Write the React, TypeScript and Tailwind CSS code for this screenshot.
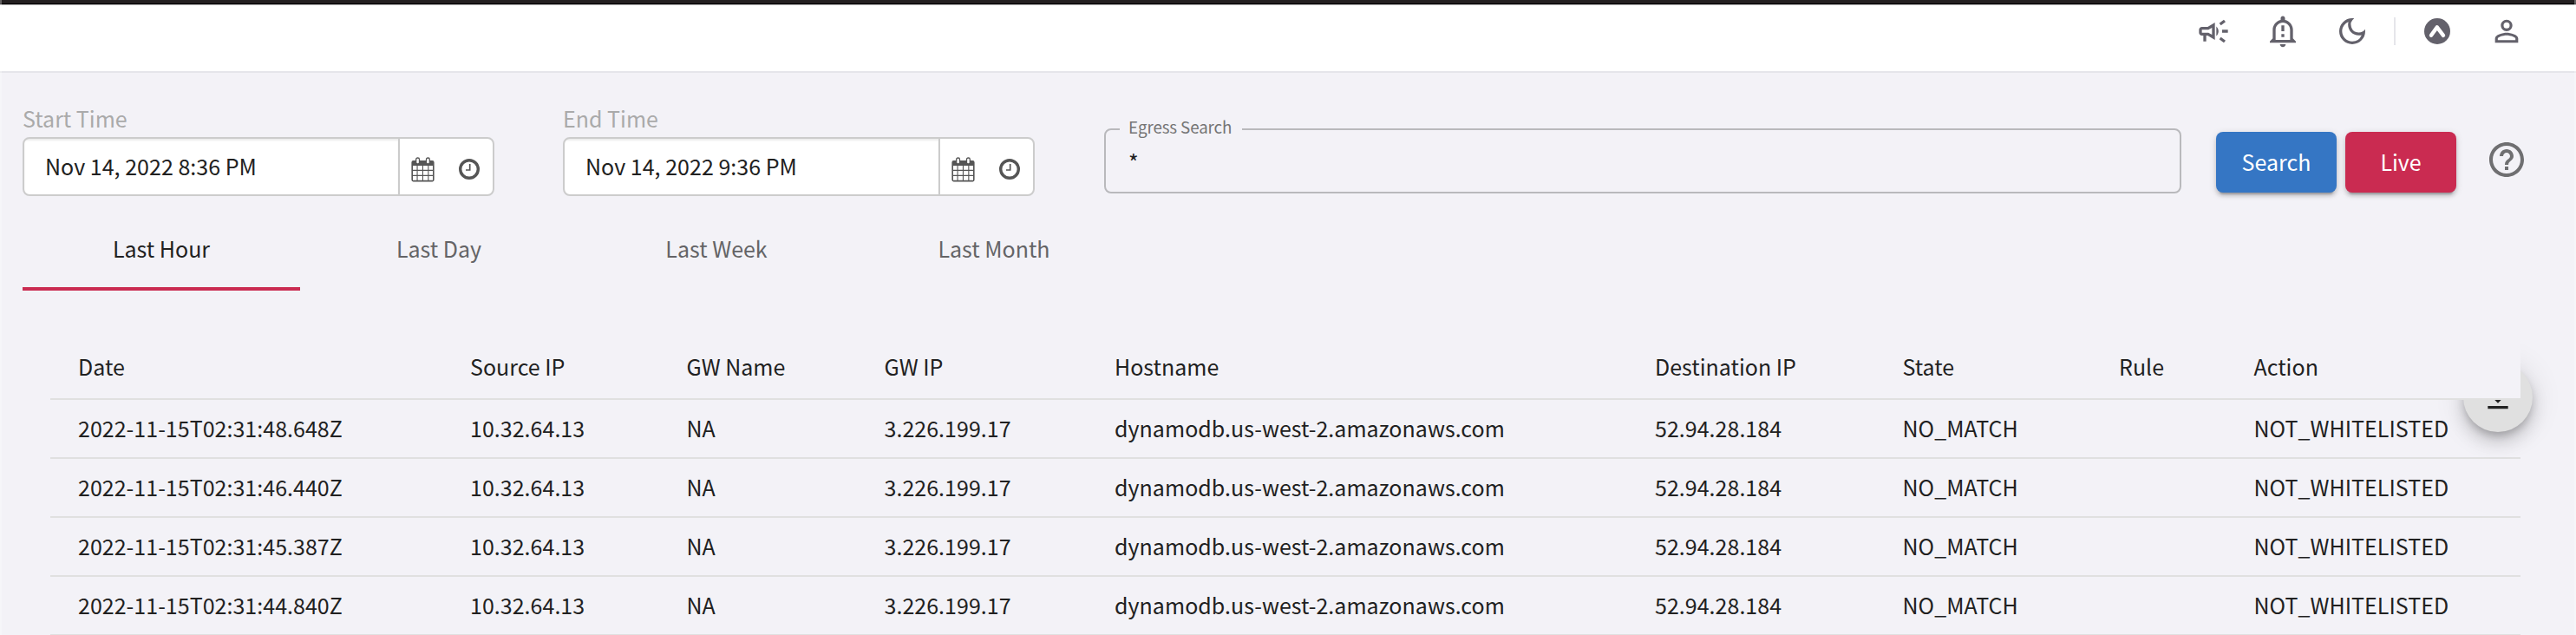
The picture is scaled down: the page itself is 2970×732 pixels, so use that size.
import React from "react";
import {
  MdOutlineCampaign,
  MdOutlineNotificationImportant,
  MdOutlineDarkMode,
  MdOutlinePersonOutline,
  MdHelpOutline,
  MdGetApp,
} from "react-icons/md";

function CalendarIcon() {
  return (
    <svg viewBox="0 0 27 29" className="h-[29px] w-[27px]">
      <path
        fill="#555"
        fillRule="evenodd"
        d="M2.5 4H24.5Q26.6 4 26.6 6.2V26.3Q26.6 28.4 24.5 28.4H2.5Q0.4 28.4 0.4 26.3V6.2Q0.4 4 2.5 4ZM2 10V14.8H6.5V10ZM7.6 10V14.8H12.9V10ZM14 10V14.8H19.3V10ZM20.4 10V14.8H25V10ZM2 15.9V20.8H6.5V15.9ZM7.6 15.9V20.8H12.9V15.9ZM14 15.9V20.8H19.3V15.9ZM20.4 15.9V20.8H25V15.9ZM2 21.9V26.8H6.5V21.9ZM7.6 21.9V26.8H12.9V21.9ZM14 21.9V26.8H19.3V21.9ZM20.4 21.9V26.8H25V21.9Z"
      />
      <rect x="5.7" y="1" width="3.8" height="7" rx="1.8" fill="#fff" stroke="#555" strokeWidth="1.3" />
      <rect x="17.5" y="1" width="3.8" height="7" rx="1.8" fill="#fff" stroke="#555" strokeWidth="1.3" />
    </svg>
  );
}

function ClockIcon() {
  return (
    <svg viewBox="0 0 24 24" className="h-6 w-6" fill="none" stroke="#555">
      <circle cx="12" cy="12" r="10.3" strokeWidth="3.4" />
      <path d="M12.7 6V13H8" strokeWidth="1.7" />
    </svg>
  );
}

function DateField({ label, value }: { label: string; value: string }) {
  return (
    <div className="w-[544px]">
      <div className="-mt-[5px] h-[39px] text-[25px] leading-[34px] text-[#aaa]">{label}</div>
      <div className="flex h-[68px] overflow-hidden rounded-[8px] border-2 border-[#ccc] bg-white">
        <div className="flex w-[431px] items-center pb-[2px] pl-[24px] text-[25px] leading-[36px] tracking-[0.02px] text-[#212121] shadow-[inset_0_2px_2px_rgba(0,0,0,0.075)]">
          {value}
        </div>
        <div className="flex flex-1 border-l-2 border-[#ccc] pt-[21px] pl-[13px]">
          <CalendarIcon />
          <div className="ml-[28px] pt-[2px]">
            <ClockIcon />
          </div>
        </div>
      </div>
    </div>
  );
}

const tabs = ["Last Hour", "Last Day", "Last Week", "Last Month"];
const headers = ["Date", "Source IP", "GW Name", "GW IP", "Hostname", "Destination IP", "State", "Rule", "Action"];
const dates = [
  "2022-11-15T02:31:48.648Z",
  "2022-11-15T02:31:46.440Z",
  "2022-11-15T02:31:45.387Z",
  "2022-11-15T02:31:44.840Z",
];
const rowRest = ["10.32.64.13", "NA", "3.226.199.17", "dynamodb.us-west-2.amazonaws.com", "52.94.28.184", "NO_MATCH", "", "NOT_WHITELISTED"];
const columns = "grid grid-cols-[452px_249.5px_228px_265.5px_623px_285.5px_249.5px_155.5px_1fr]";

export default function App() {
  return (
    <div className="relative h-[732px] w-[2970px] overflow-hidden bg-[#f3f2f7] font-['Noto_Sans_CJK_SC',sans-serif] text-[25px] text-[#212121]">
      <header className="h-[84px] border-b-2 border-[#e5e5ea] bg-white">
        <div className="h-[5px] border-b border-black bg-[#231f20]" />
        <div className="flex h-[61px] items-center justify-end border-t border-[#b5b4b5] pr-[60px] text-[40px] text-[#63616b]">
          <MdOutlineCampaign />
          <MdOutlineNotificationImportant className="ml-10" />
          <MdOutlineDarkMode className="ml-10" />
          <div className="ml-[28px] h-8 w-[2px] bg-[#e5e5ea]" />
          <svg viewBox="0 0 30 30" className="ml-[33px] h-[30px] w-[30px]">
            <circle cx="15" cy="15" r="15" fill="currentColor" />
            <path d="M8 19.8L14.8 10.4L22 19.8" fill="none" stroke="#fff" strokeWidth="4.4" strokeLinecap="round" strokeLinejoin="round" />
          </svg>
          <MdOutlinePersonOutline className="ml-[45px]" />
        </div>
      </header>

      <section className="flex h-[142px] pt-[40px] pl-[26px]">
        <DateField label="Start Time" value="Nov 14, 2022 8:36 PM" />
        <div className="w-[79px]" />
        <DateField label="End Time" value="Nov 14, 2022 9:36 PM" />
        <fieldset className="mt-[15px] ml-[80px] h-[84px] w-[1242px] rounded-[8px] border-2 border-[#b9b9bc] pl-[16px]">
          <legend className="h-[20px] w-[141px] px-[10px] text-[18.8px] leading-[14px] tracking-[-0.12px] whitespace-nowrap text-[#757575]">
            Egress Search
          </legend>
          <div className="pt-[9px] pl-[10px] leading-[36px]">*</div>
        </fieldset>
        <button className="mt-[28px] ml-10 h-[70px] w-[139px] rounded-[8px] bg-[#3576c4] text-white shadow-[0_6px_2px_-4px_rgba(0,0,0,0.2),0_4px_4px_0_rgba(0,0,0,0.14),0_2px_10px_0_rgba(0,0,0,0.12)]">
          Search
        </button>
        <button className="mt-[28px] ml-[10px] h-[70px] w-[128px] rounded-[8px] bg-[#ca2b51] text-white shadow-[0_6px_2px_-4px_rgba(0,0,0,0.2),0_4px_4px_0_rgba(0,0,0,0.14),0_2px_10px_0_rgba(0,0,0,0.12)]">
          Live
        </button>
        <MdHelpOutline className="mt-[36px] ml-[34px] h-12 w-12 text-[#6f6f71]" />
      </section>

      <nav className="flex pt-[13px] pl-[26px]">
        {tabs.map((t, i) => (
          <div
            key={t}
            className={
              i === 0
                ? "flex h-24 w-[320px] items-center justify-center border-b-4 border-[#ca2b51] pt-1 text-[#212121]"
                : "flex h-24 w-[320px] items-center justify-center border-b-4 border-transparent pt-1 text-[#646466]"
            }
          >
            {t}
          </div>
        ))}
      </nav>

      <main className="relative mt-[52px] ml-[58px] w-[2848px]">
        <div className="absolute top-[31px] left-[2782px] flex h-20 w-20 items-center justify-center rounded-full bg-[#e0e0e0] shadow-[0_6px_10px_-2px_rgba(0,0,0,0.2),0_12px_20px_0_rgba(0,0,0,0.14),0_2px_36px_0_rgba(0,0,0,0.12)]">
          <MdGetApp className="h-10 w-10" />
        </div>
        <div className={`${columns} relative h-[74px] items-center border-b-2 border-[#e0e0e0] bg-[#f3f2f7]`}>
          {headers.map((h) => (
            <div key={h} className="pl-8">
              {h}
            </div>
          ))}
        </div>
        {dates.map((d) => (
          <div key={d} className={`${columns} h-[68px] items-center border-b-2 border-[#e0e0e0]`}>
            {[d, ...rowRest].map((c, i) => (
              <div key={i} className="pl-8 tracking-[0.03px]">
                {c}
              </div>
            ))}
          </div>
        ))}
      </main>
      <div className="absolute top-0 left-0 h-full w-[2px] bg-white/30" />
      <div className="absolute top-0 right-0 h-full w-[2px] bg-white/30" />
    </div>
  );
}
